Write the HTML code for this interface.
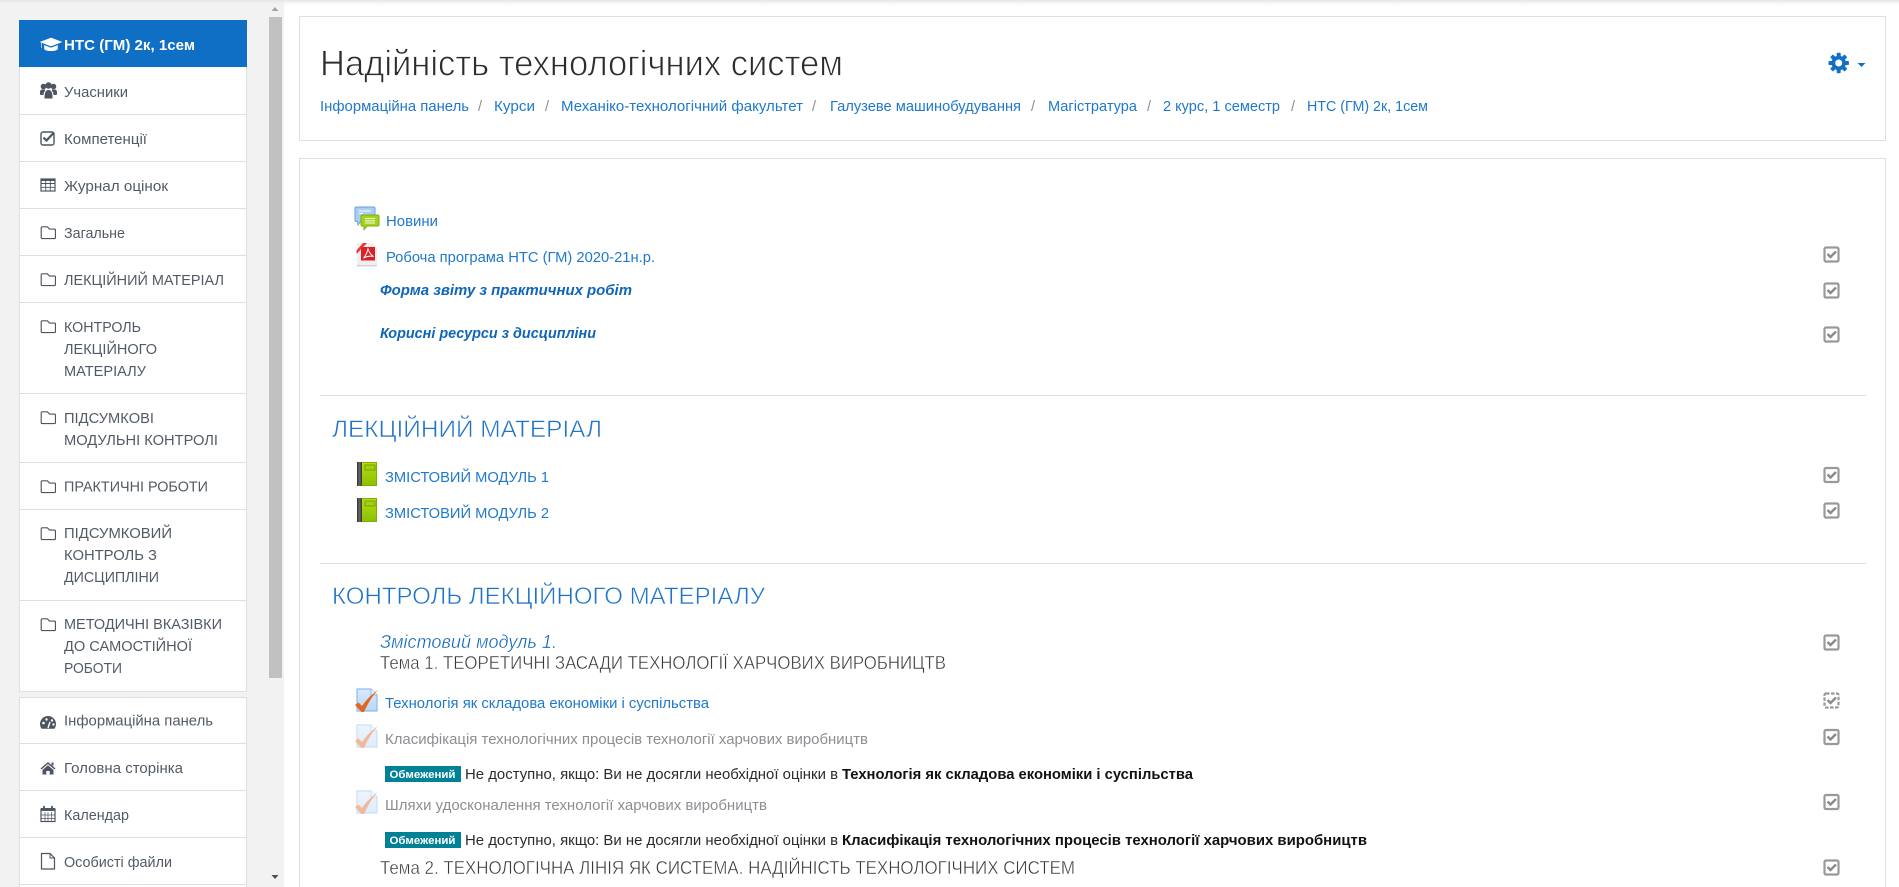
<!DOCTYPE html>
<html lang="uk">
<head>
<meta charset="utf-8">
<title>Надійність технологічних систем</title>
<style>
html,body{margin:0;padding:0;width:1899px;height:887px;overflow:hidden;background:#fff}
svg{position:absolute;left:0;top:0;display:block}
text{font-family:"Liberation Sans","DejaVu Sans",sans-serif;white-space:pre}
.n{font-size:14.5px;fill:#525b65}
.l{font-size:14.5px;fill:#2079cc}
.g{font-size:14.5px;fill:#8b8f93}
.b{font-size:14.5px;fill:#2b2b2b}
.h{font-size:24px;fill:#1f74c8;stroke:#fff;stroke-width:.55px}
.t{font-size:18px;fill:#373a3c;stroke:#fff;stroke-width:.4px}
.x{font-size:14.5px;font-weight:bold;font-style:italic;fill:#0f66b8}
</style>
</head>
<body>
<svg width="1899" height="887" viewBox="0 0 1899 887" xmlns="http://www.w3.org/2000/svg">
<defs>
<linearGradient id="sh" x1="0" y1="0" x2="0" y2="1"><stop offset="0" stop-color="#e4e4e4"/><stop offset="1" stop-color="#f7f7f7" stop-opacity="0"/></linearGradient>
<linearGradient id="bk" x1="0" y1="0" x2="0" y2="1"><stop offset="0" stop-color="#b5dc14"/><stop offset="1" stop-color="#8abf00"/></linearGradient>
<linearGradient id="bd" x1="0" y1="0" x2="1" y2="0"><stop offset="0" stop-color="#2f2f2f"/><stop offset=".5" stop-color="#6a6a6a"/><stop offset="1" stop-color="#333"/></linearGradient>
<linearGradient id="bl" x1="0" y1="0" x2="0" y2="1"><stop offset="0" stop-color="#d9eafc"/><stop offset="1" stop-color="#b8d7f6"/></linearGradient>
<g id="cb"><rect x="-7" y="-7" width="14" height="14" rx="1.500" fill="none" stroke="#999" stroke-width="2.200"/><path d="M-4-.5l3 3 5.500-5.500" fill="none" stroke="#8a8a8a" stroke-width="2.400"/></g>
<g id="fo"><path d="M1 .7h5.500l2.200 2.300h5.300c.6 0 1 .4 1 1v8c0 .6-.4 1-1 1H1c-.6 0-1-.4-1-1V1.700c0-.6.400-1 1-1z" fill="none" stroke="#4d5660" stroke-width="1.200" transform="translate(.7 .2) scale(.95)"/></g>
<g id="qz"><path d="M1 1h14l6 6v16H1z" fill="url(#bl)" stroke="#8ebcec" stroke-width="1.200"/><path d="M15 1v6h6" fill="#eef6fe" stroke="#8ebcec"/><path d="M-1 17l3.500-2.500 3.500 3.500C11 11 16 6 22 2c-5 5-10 13-14 22h-2.500z" fill="#e2661e"/></g>
<g id="bo"><rect width="20" height="24" fill="url(#bk)"/><rect width="5" height="24" fill="url(#bd)"/><rect x="8" y="3" width="10" height="5" fill="#a3cf10" stroke="#77a300"/><path d="M5.500 .5h14v23h-14" fill="none" stroke="#7eb000"/></g>
</defs>

<!-- sidebar background -->
<rect x="0" y="0" width="284" height="887" fill="#f2f2f2"/>
<rect x="0" y="0" width="1899" height="6" fill="url(#sh)"/>
<!-- scrollbar -->
<rect x="269" y="17" width="13" height="661" fill="#c1c1c1"/>
<path d="M271.500 11l3.500-4 3.500 4z" fill="#a3a3a3"/>
<path d="M271.500 875l3.500 4 3.500-4z" fill="#505050"/>

<!-- nav block 1 -->
<rect x="19.500" y="20.500" width="227" height="671" fill="#fff" stroke="#dfdfdf"/>
<rect x="19" y="20" width="228" height="47" fill="#0f6fc5"/>
<g stroke="#dfdfdf" stroke-width="1">
<path d="M20 114.500h226M20 161.500h226M20 208.500h226M20 255.500h226M20 302.500h226M20 393.500h226M20 462.500h226M20 509.500h226M20 600.500h226"/>
</g>
<!-- nav block 2 -->
<rect x="19.500" y="697.500" width="227" height="200" fill="#fff" stroke="#dfdfdf"/>
<path d="M20 743.500h226M20 790.500h226M20 837.500h226M20 884.500h226" stroke="#dfdfdf"/>

<!-- nav icons -->
<path d="M51 38L40.500 42 51 46l10.500-4zM44.500 45.500v3.500c2 2.300 11 2.300 13 0v-3.500L51 48zM41.500 43v5" fill="#fff" stroke="#fff" stroke-width=".6"/>
<g fill="#4d5660">
<circle cx="43.500" cy="86.500" r="2.800"/><circle cx="48.500" cy="85.500" r="3.200"/><circle cx="53.500" cy="86.500" r="2.800"/>
<path d="M40 92.500c0-2 1-3 2-3h3v1.500c-1 1-1.500 2-1.500 4H41c-.7 0-1-.6-1-1.200zM44.500 98.500c0-5 .8-8.500 4-8.500s4.300 3.500 4 8.500zM57 92.500c0-2-1-3-2-3h-3v1.500c1 1 1.500 2 1.500 4H56c.7 0 1-.6 1-1.200z"/>
</g>
<rect x="41" y="132" width="13" height="13" rx="2" fill="none" stroke="#4d5660" stroke-width="1.400"/>
<path d="M43.500 137.500l3 3 7.500-8" fill="none" stroke="#4d5660" stroke-width="2.200"/>
<rect x="41" y="179" width="14" height="12" fill="none" stroke="#4d5660" stroke-width="1.200"/>
<path d="M41 183.500h14M41 187.300h14M45.700 179v12M50.300 179v12" stroke="#4d5660" stroke-width=".9"/>
<rect x="41" y="179" width="14" height="2" fill="#4d5660"/>
<use href="#fo" x="40.500" y="226"/>
<use href="#fo" x="40.500" y="273"/>
<use href="#fo" x="40.500" y="320"/>
<use href="#fo" x="40.500" y="411"/>
<use href="#fo" x="40.500" y="480"/>
<use href="#fo" x="40.500" y="527"/>
<use href="#fo" x="40.500" y="618"/>
<!-- dashboard -->
<path d="M48 716c-4.400 0-8 3.500-8 8 0 1.800.6 3.300 1.500 4.700h13c.9-1.400 1.500-2.900 1.500-4.700 0-4.500-3.600-8-8-8z" fill="#4d5660"/>
<path d="M48 728l2-6" stroke="#fff" stroke-width="1.400"/><circle cx="43.500" cy="723" r="1.300" fill="#fff"/><circle cx="46.500" cy="719.500" r="1.200" fill="#fff"/><circle cx="52" cy="720.500" r="1.200" fill="#fff"/><circle cx="53.500" cy="724.500" r="1.200" fill="#fff"/>
<!-- home -->
<path d="M48 762l-7.500 6.500 1 1 6.500-5.500 6.500 5.500 1-1zM42.500 770v4.500h3.800v-3.500h3.400v3.500h3.800V770L48 765.300z" fill="#4d5660"/><rect x="51.500" y="762.500" width="2" height="3" fill="#4d5660"/>
<!-- calendar -->
<rect x="41" y="809" width="14" height="12.500" fill="none" stroke="#4d5660" stroke-width="1.200"/>
<rect x="41" y="808" width="14" height="3" fill="#4d5660"/>
<path d="M44 806v3.500M52 806v3.500" stroke="#4d5660" stroke-width="1.800"/>
<path d="M41 815h14M41 818.500h14M45 812v9M48 812v9M51.500 812v9" stroke="#4d5660" stroke-width=".7"/>
<!-- file -->
<path d="M41.500 853.500h8.500l4.500 4.500v11h-13z" fill="none" stroke="#4d5660" stroke-width="1.200"/><path d="M50 853.500v4.500h4.500" fill="none" stroke="#4d5660" stroke-width="1"/>

<!-- nav text -->
<text x="64" y="50" font-size="14.500" font-weight="bold" fill="#fff" textLength="131" lengthAdjust="spacingAndGlyphs">НТС (ГМ) 2к, 1сем</text>
<text class="n" x="64" y="97" textLength="64" lengthAdjust="spacingAndGlyphs">Учасники</text>
<text class="n" x="64" y="144" textLength="83" lengthAdjust="spacingAndGlyphs">Компетенції</text>
<text class="n" x="64" y="191" textLength="104" lengthAdjust="spacingAndGlyphs">Журнал оцінок</text>
<text class="n" x="64" y="238" textLength="61" lengthAdjust="spacingAndGlyphs">Загальне</text>
<text class="n" x="64" y="285" textLength="160" lengthAdjust="spacingAndGlyphs">ЛЕКЦІЙНИЙ МАТЕРІАЛ</text>
<text class="n" x="64" y="332" textLength="77" lengthAdjust="spacingAndGlyphs">КОНТРОЛЬ</text>
<text class="n" x="64" y="354" textLength="93" lengthAdjust="spacingAndGlyphs">ЛЕКЦІЙНОГО</text>
<text class="n" x="64" y="376" textLength="82" lengthAdjust="spacingAndGlyphs">МАТЕРІАЛУ</text>
<text class="n" x="64" y="423" textLength="90" lengthAdjust="spacingAndGlyphs">ПІДСУМКОВІ</text>
<text class="n" x="64" y="445" textLength="154" lengthAdjust="spacingAndGlyphs">МОДУЛЬНІ КОНТРОЛІ</text>
<text class="n" x="64" y="491.500" textLength="144" lengthAdjust="spacingAndGlyphs">ПРАКТИЧНІ РОБОТИ</text>
<text class="n" x="64" y="538" textLength="108" lengthAdjust="spacingAndGlyphs">ПІДСУМКОВИЙ</text>
<text class="n" x="64" y="560" textLength="93" lengthAdjust="spacingAndGlyphs">КОНТРОЛЬ З</text>
<text class="n" x="64" y="582" textLength="95" lengthAdjust="spacingAndGlyphs">ДИСЦИПЛІНИ</text>
<text class="n" x="64" y="629" textLength="158" lengthAdjust="spacingAndGlyphs">МЕТОДИЧНІ ВКАЗІВКИ</text>
<text class="n" x="64" y="651" textLength="128" lengthAdjust="spacingAndGlyphs">ДО САМОСТІЙНОЇ</text>
<text class="n" x="64" y="673" textLength="58" lengthAdjust="spacingAndGlyphs">РОБОТИ</text>
<text class="n" x="64" y="725.500" textLength="149" lengthAdjust="spacingAndGlyphs">Інформаційна панель</text>
<text class="n" x="64" y="773" textLength="119" lengthAdjust="spacingAndGlyphs">Головна сторінка</text>
<text class="n" x="64" y="820" textLength="65" lengthAdjust="spacingAndGlyphs">Календар</text>
<text class="n" x="64" y="867" textLength="108" lengthAdjust="spacingAndGlyphs">Особисті файли</text>

<!-- header card -->
<rect x="299.500" y="16.500" width="1586" height="124" fill="#fff" stroke="#dfdfdf"/>
<text x="320" y="75.500" font-size="36" fill="#2b2e30" stroke="#fff" stroke-width=".85" textLength="523" lengthAdjust="spacingAndGlyphs">Надійність технологічних систем</text>
<text class="l" x="320" y="111" textLength="149" lengthAdjust="spacingAndGlyphs">Інформаційна панель</text>
<text class="g" x="478" y="111">/</text>
<text class="l" x="494" y="111" textLength="41" lengthAdjust="spacingAndGlyphs">Курси</text>
<text class="g" x="545" y="111">/</text>
<text class="l" x="561" y="111" textLength="242" lengthAdjust="spacingAndGlyphs">Механіко-технологічний факультет</text>
<text class="g" x="812" y="111">/</text>
<text class="l" x="830" y="111" textLength="191" lengthAdjust="spacingAndGlyphs">Галузеве машинобудування</text>
<text class="g" x="1031" y="111">/</text>
<text class="l" x="1048" y="111" textLength="89" lengthAdjust="spacingAndGlyphs">Магістратура</text>
<text class="g" x="1147" y="111">/</text>
<text class="l" x="1163" y="111" textLength="117" lengthAdjust="spacingAndGlyphs">2 курс, 1 семестр</text>
<text class="g" x="1291" y="111">/</text>
<text class="l" x="1307" y="111" textLength="121" lengthAdjust="spacingAndGlyphs">НТС (ГМ) 2к, 1сем</text>
<!-- gear -->
<g transform="translate(1838.700 63)" fill="#1170c6">
<circle r="7.200"/>
<rect x="-2" y="-10.200" width="4" height="20.400" rx=".8"/>
<rect x="-2" y="-10.200" width="4" height="20.400" rx=".8" transform="rotate(45)"/>
<rect x="-2" y="-10.200" width="4" height="20.400" rx=".8" transform="rotate(90)"/>
<rect x="-2" y="-10.200" width="4" height="20.400" rx=".8" transform="rotate(135)"/>
<circle r="3.500" fill="#fff"/>
</g>
<path d="M1857.500 63h8l-4 4z" fill="#1170c6"/>

<!-- content card -->
<rect x="299.500" y="158.500" width="1586" height="740" fill="#fff" stroke="#dfdfdf"/>

<!-- forum icon -->
<path d="M356.500 207h17c1 0 1.500.5 1.500 1.500v11.500c0 1-.5 1.500-1.500 1.500h-13l-2.500 3.500-.5-3.500h-1c-1 0-1.500-.5-1.500-1.500V208.500c0-1 .5-1.500 1.500-1.500z" fill="#a9cdf5" stroke="#6f9fdc"/>
<path d="M359 211h12M359 213.500h4" stroke="#fff" stroke-width="1.100"/>
<path d="M362.500 215h15c1 0 1.500.5 1.500 1.500v8c0 1-.5 1.500-1.500 1.500H367l-3 3.500V226h-1.500c-1 0-1.500-.5-1.500-1.500v-8c0-1 .5-1.500 1.500-1.500z" fill="#a5d31d" stroke="#7dac0e"/>
<path d="M365 218.500h10M365 220.800h10M365 223h10" stroke="#f4fbe0" stroke-width="1.100"/>
<!-- pdf icon -->
<path d="M357 243h15l5 5v18h-20z" fill="#efefef"/><path d="M357 265h20v1.500h-20z" fill="#d2d2d2"/>
<rect x="361" y="247" width="14" height="13.500" fill="#dd1f26"/>
<path d="M356.500 250.500l6.500-7.500h4l-10.500 11z" fill="#e5353a"/>
<path d="M363.500 258c2.500-2.500 3.800-6 4.500-9 1 3 2.500 5.500 5.500 7.500-3.500-.8-6.500-.3-10 1.500z" fill="none" stroke="#fff" stroke-width="1"/>

<text class="l" x="386" y="226" textLength="52" lengthAdjust="spacingAndGlyphs">Новини</text>
<text class="l" x="386" y="262" textLength="269" lengthAdjust="spacingAndGlyphs">Робоча програма НТС (ГМ) 2020-21н.р.</text>
<text class="x" x="380" y="295" textLength="252" lengthAdjust="spacingAndGlyphs">Форма звіту з практичних робіт</text>
<text class="x" x="380" y="338" textLength="216" lengthAdjust="spacingAndGlyphs">Корисні ресурси з дисципліни</text>

<use href="#cb" x="1831.500" y="254.500"/>
<use href="#cb" x="1831.500" y="290.500"/>
<use href="#cb" x="1831.500" y="334.500"/>

<path d="M320 395.500h1546" stroke="#dfdfdf"/>
<text class="h" x="332" y="437" textLength="270" lengthAdjust="spacingAndGlyphs">ЛЕКЦІЙНИЙ МАТЕРІАЛ</text>

<use href="#bo" x="357" y="462"/>
<use href="#bo" x="357" y="498"/>
<text class="l" x="385" y="482" textLength="164" lengthAdjust="spacingAndGlyphs">ЗМІСТОВИЙ МОДУЛЬ 1</text>
<text class="l" x="385" y="518" textLength="164" lengthAdjust="spacingAndGlyphs">ЗМІСТОВИЙ МОДУЛЬ 2</text>
<use href="#cb" x="1831.500" y="475"/>
<use href="#cb" x="1831.500" y="510.500"/>

<path d="M320 563.500h1546" stroke="#dfdfdf"/>
<text class="h" x="332" y="604" textLength="433" lengthAdjust="spacingAndGlyphs">КОНТРОЛЬ ЛЕКЦІЙНОГО МАТЕРІАЛУ</text>

<text x="380" y="648" font-size="18" font-style="italic" fill="#0f66b8" stroke="#fff" stroke-width=".35" textLength="177" lengthAdjust="spacingAndGlyphs">Змістовий модуль 1.</text>
<text class="t" x="380" y="669" textLength="566" lengthAdjust="spacingAndGlyphs">Тема 1. ТЕОРЕТИЧНІ ЗАСАДИ ТЕХНОЛОГІЇ ХАРЧОВИХ ВИРОБНИЦТВ</text>
<use href="#cb" x="1831.500" y="642.500"/>

<use href="#qz" x="356" y="688"/>
<text class="l" x="385" y="708" textLength="324" lengthAdjust="spacingAndGlyphs">Технологія як складова економіки і суспільства</text>
<g transform="translate(1831.500 700.500)"><rect x="-7" y="-7" width="14" height="14" rx="1.500" fill="none" stroke="#999" stroke-width="2.200" stroke-dasharray="3.500 1.500"/><path d="M-4-.5l3 3 5.500-5.500" fill="none" stroke="#8a8a8a" stroke-width="2.400"/></g>

<use href="#qz" x="356" y="724" opacity=".45"/>
<text class="g" x="385" y="744" textLength="483" lengthAdjust="spacingAndGlyphs">Класифікація технологічних процесів технології харчових виробництв</text>
<use href="#cb" x="1831.500" y="737"/>

<rect x="385" y="766" width="76" height="16" fill="#008196"/>
<text x="389.500" y="778" font-size="11" font-weight="bold" fill="#fff" textLength="66" lengthAdjust="spacingAndGlyphs">Обмежений</text>
<text class="b" x="465" y="779" textLength="373" lengthAdjust="spacingAndGlyphs">Не доступно, якщо: Ви не досягли необхідної оцінки в</text>
<text class="b" x="842" y="779" font-weight="bold" style="fill:#111" textLength="351" lengthAdjust="spacingAndGlyphs">Технологія як складова економіки і суспільства</text>

<use href="#qz" x="356" y="790" opacity=".45"/>
<text class="g" x="385" y="810" textLength="382" lengthAdjust="spacingAndGlyphs">Шляхи удосконалення технології харчових виробництв</text>
<use href="#cb" x="1831.500" y="802"/>

<rect x="385" y="832" width="76" height="16" fill="#008196"/>
<text x="389.500" y="844" font-size="11" font-weight="bold" fill="#fff" textLength="66" lengthAdjust="spacingAndGlyphs">Обмежений</text>
<text class="b" x="465" y="845" textLength="373" lengthAdjust="spacingAndGlyphs">Не доступно, якщо: Ви не досягли необхідної оцінки в</text>
<text class="b" x="842" y="845" font-weight="bold" style="fill:#111" textLength="525" lengthAdjust="spacingAndGlyphs">Класифікація технологічних процесів технології харчових виробництв</text>

<text class="t" x="380" y="874" textLength="695" lengthAdjust="spacingAndGlyphs">Тема 2. ТЕХНОЛОГІЧНА ЛІНІЯ ЯК СИСТЕМА. НАДІЙНІСТЬ ТЕХНОЛОГІЧНИХ СИСТЕМ</text>
<use href="#cb" x="1831.500" y="867.500"/>
</svg>
</body>
</html>
